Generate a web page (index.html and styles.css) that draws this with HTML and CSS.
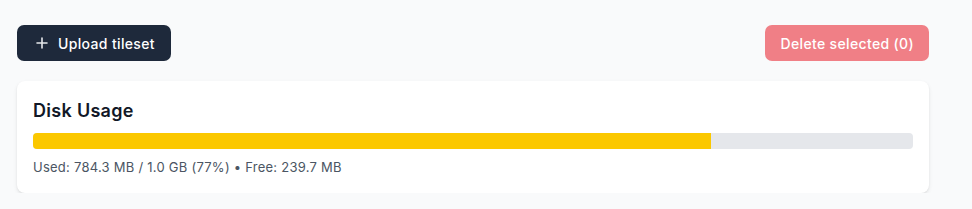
FILE: index.html
```html
<!DOCTYPE html>
<html lang="en">
  <head>
    <meta charset="UTF-8" />
    <meta name="viewport" content="width=device-width, initial-scale=1.0" />
    <title>Tilesets</title>
    <link rel="stylesheet" href="styles.css">
  </head>
  <body>
    <div class="page">
      <div class="toolbar">
        <button class="btn btn-dark">
          <svg width="14" height="14" viewBox="0 0 14 14" fill="none" stroke="currentColor" stroke-width="1.6" stroke-linecap="round">
            <path d="M7 2v10M2 7h10" />
          </svg>
          Upload tileset
        </button>
        <button class="btn btn-danger" disabled>Delete selected (0)</button>
      </div>

      <div class="card">
        <h2 class="card-title">Disk Usage</h2>
        <div class="usage-bar">
          <div class="usage-fill" style="width: 77%"></div>
        </div>
        <p class="usage-text">Used: 784.3 MB / 1.0 GB (77%) • Free: 239.7 MB</p>
      </div>
    </div>
  </body>
</html>
```

FILE: styles.css
```css
body {
  margin: 0;
  padding: 0;
  background: #f9fafb;
  font-family: Inter, "Noto Sans", sans-serif;
  color: #111827;
}
.page {
  padding: 25px 43px 0 17px;
}
.toolbar {
  display: flex;
  justify-content: space-between;
  align-items: center;
  margin-bottom: 20px;
}
.btn {
  display: flex;
  align-items: center;
  gap: 9px;
  height: 36px;
  padding: 0 16px;
  border: none;
  border-radius: 7px;
  font-family: inherit;
  font-size: 14px;
  font-weight: 500;
  letter-spacing: 0.35px;
  color: #fff;
  cursor: pointer;
}
.btn-dark {
  background: #1e293b;
  padding-left: 18px;
}
.btn-dark svg {
  color: #e5e7eb;
}
.btn-danger {
  background: #f07f86;
  padding: 0 15px;
  cursor: default;
}
.card {
  background: #fff;
  border-radius: 8px;
  box-shadow: 0 2px 4px rgba(0, 0, 0, 0.08), 0 1px 2px rgba(0, 0, 0, 0.06);
  padding: 16px;
}
.card-title {
  margin: 0 0 8px;
  font-size: 18px;
  line-height: 28px;
  font-weight: 600;
  letter-spacing: 0.3px;
  color: #111827;
}
.usage-bar {
  height: 16px;
  background: #e5e7eb;
  border-radius: 4px;
  overflow: hidden;
}
.usage-fill {
  height: 100%;
  background: #fbc800;
}
.usage-text {
  margin: 8px 0 0;
  font-size: 13px;
  line-height: 20px;
  letter-spacing: 0.25px;
  color: #4b5563;
}
```
